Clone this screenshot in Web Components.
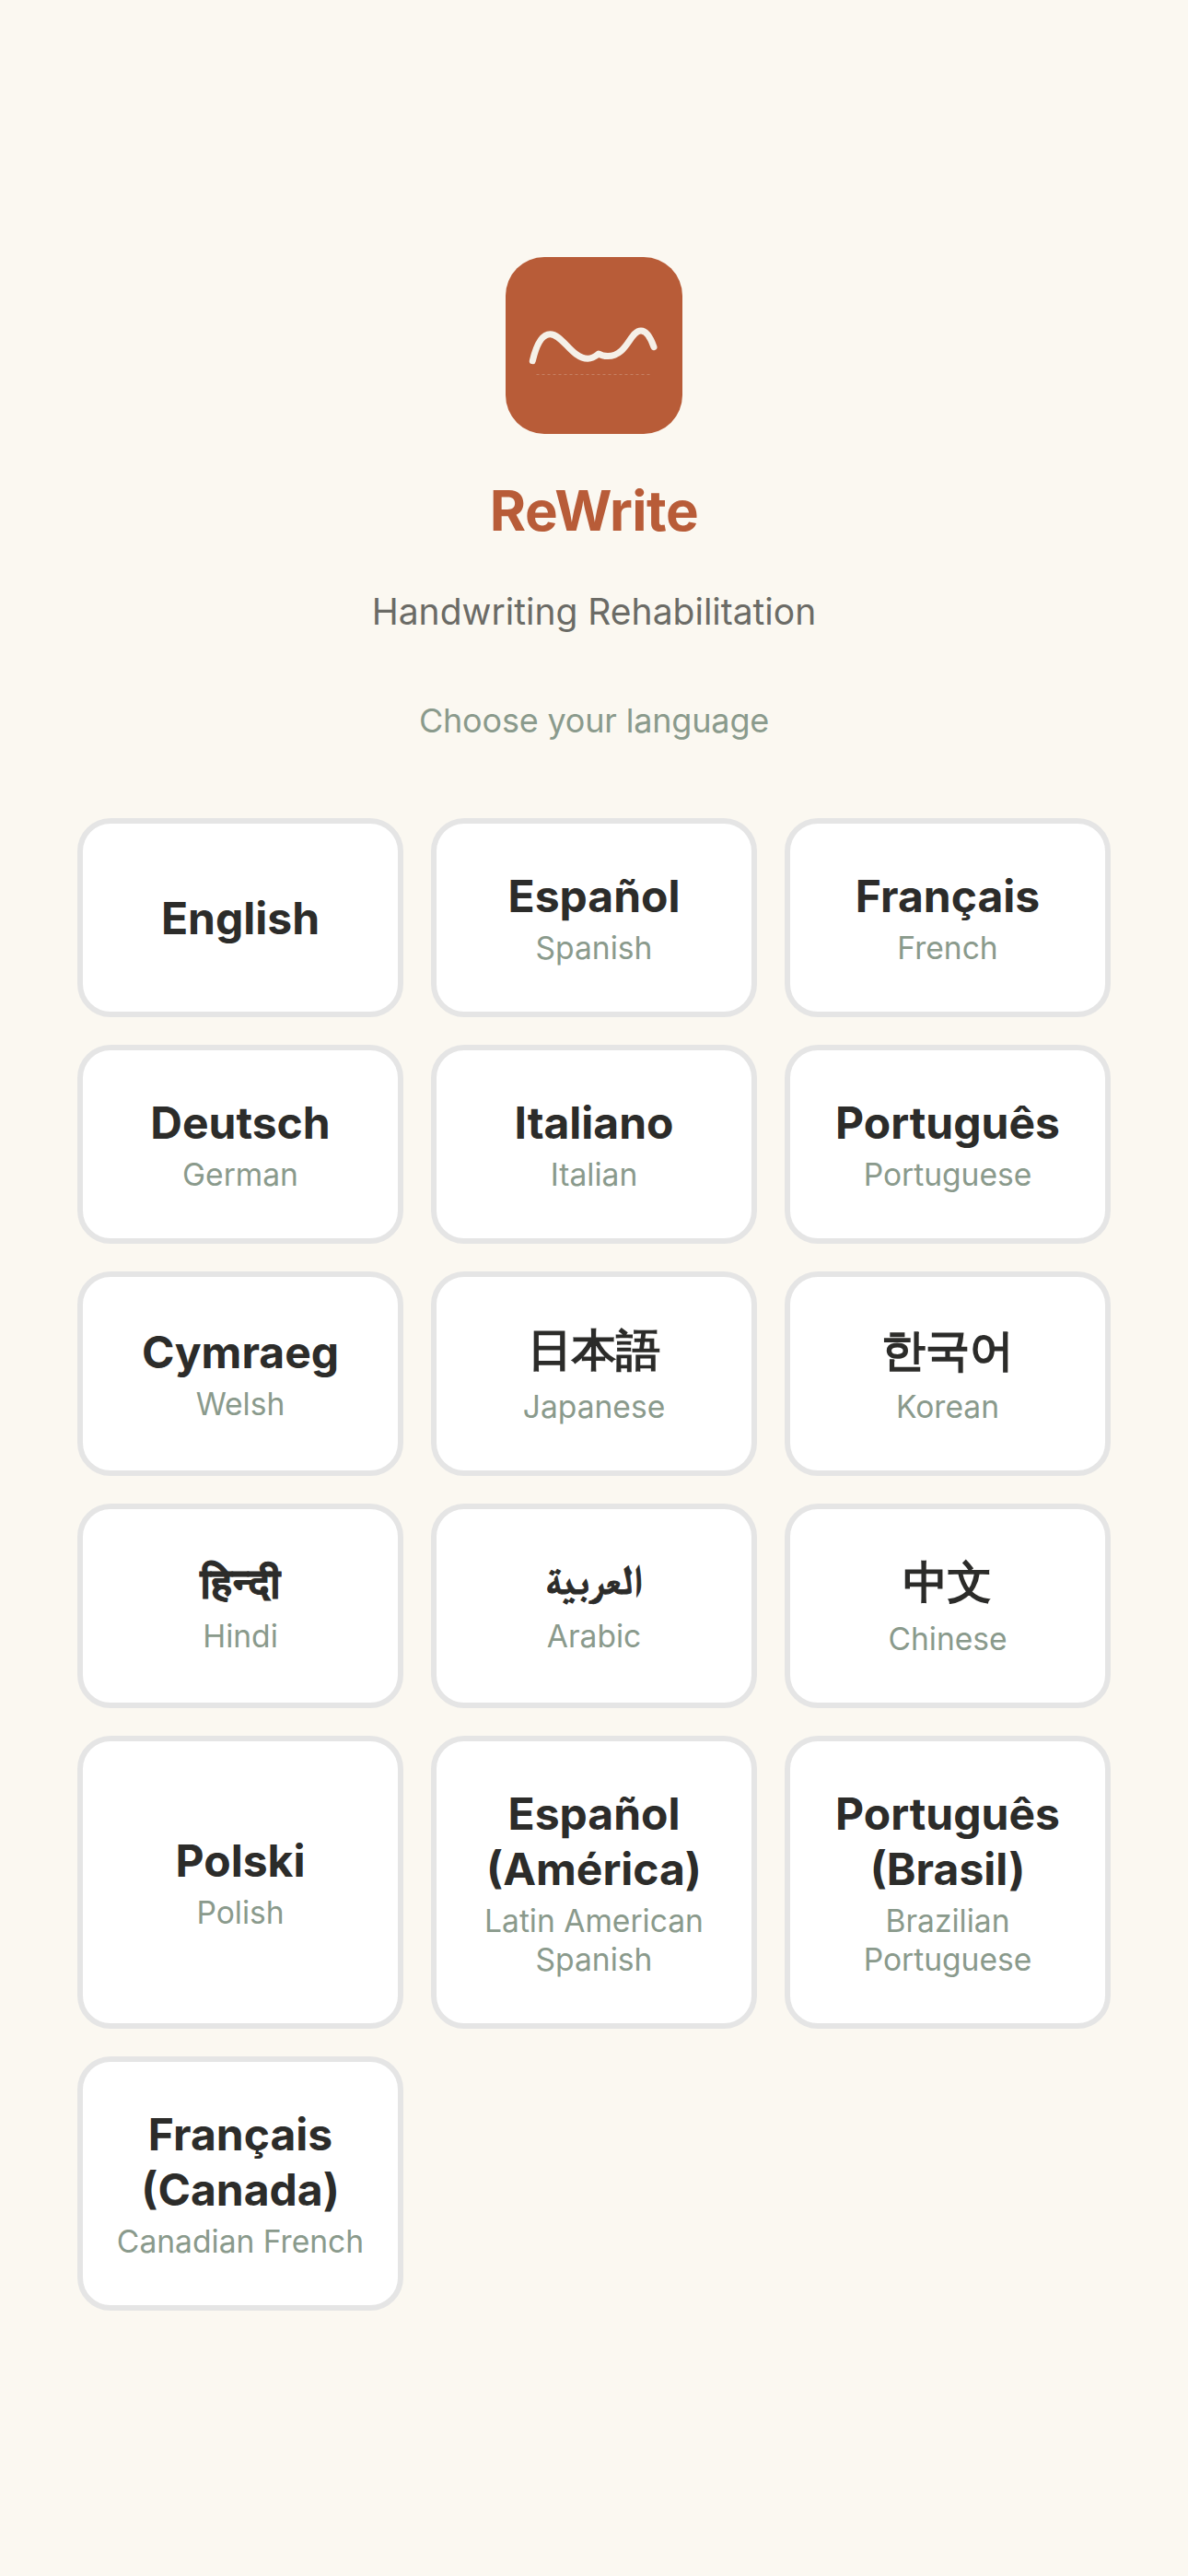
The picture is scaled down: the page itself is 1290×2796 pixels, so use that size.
<!DOCTYPE html>
<html lang="en">
<head>
<meta charset="utf-8">
<title>ReWrite</title>
<style>
	html, body { margin: 0; padding: 0; background: #fbf8f1; }
	body { font-family: Inter, "Noto Sans CJK JP", sans-serif; }
</style>
</head>
<body>
<rw-screen>
	<rw-brand title-text="ReWrite" tagline="Handwriting Rehabilitation" prompt="Choose your language"></rw-brand>
	<lang-grid>
		<lang-card name="English"></lang-card>
		<lang-card name="Español" sub="Spanish"></lang-card>
		<lang-card name="Français" sub="French"></lang-card>
		<lang-card name="Deutsch" sub="German"></lang-card>
		<lang-card name="Italiano" sub="Italian"></lang-card>
		<lang-card name="Português" sub="Portuguese"></lang-card>
		<lang-card name="Cymraeg" sub="Welsh"></lang-card>
		<lang-card name="日本語" sub="Japanese" script="cjk"></lang-card>
		<lang-card name="한국어" sub="Korean" script="cjk"></lang-card>
		<lang-card name="हिन्दी" sub="Hindi" script="deva"></lang-card>
		<lang-card name="العربية" sub="Arabic" script="arab"></lang-card>
		<lang-card name="中文" sub="Chinese" script="cjk"></lang-card>
		<lang-card name="Polski" sub="Polish"></lang-card>
		<lang-card name="Español (América)" sub="Latin American Spanish"></lang-card>
		<lang-card name="Português (Brasil)" sub="Brazilian Portuguese"></lang-card>
		<lang-card name="Français (Canada)" sub="Canadian French"></lang-card>
	</lang-grid>
</rw-screen>
<script>
class RwScreen extends HTMLElement {
	constructor() {
		super();
		this.attachShadow({ mode: "open" });
		this.shadowRoot.innerHTML = `
			<style>
				:host {
					display: flex;
					flex-direction: column;
					box-sizing: border-box;
					min-height: 2796px;
					padding: 279px 84px 288px;
				}
			</style>
			<slot></slot>
		`;
	}
}
customElements.define("rw-screen", RwScreen);

class RwLogo extends HTMLElement {
	constructor() {
		super();
		this.attachShadow({ mode: "open" });
		this.shadowRoot.innerHTML = `
			<style>
				:host {
					display: block;
					width: 192px;
					height: 192px;
					border-radius: 42px;
					background: #b85c38;
				}
				svg { display: block; }
			</style>
			<svg width="192" height="192" viewBox="0 0 192 192" fill="none" xmlns="http://www.w3.org/2000/svg">
				<path d="M29.3 112.7C33 97 39 83.7 48.3 83.7C62 83.7 72 110.3 89.3 110.3C95 110.3 98 107.5 101 105C104 107 107 107.5 111 107.5C132 107.5 135 80 147 80C153 80 158 89 161 97.7" stroke="#f5f0e8" stroke-width="7" stroke-linecap="round" stroke-linejoin="round"/>
				<line x1="33.5" y1="127.5" x2="158.5" y2="127.5" stroke="#f5f0e8" stroke-opacity="0.25" stroke-width="1" stroke-dasharray="3 3"/>
			</svg>
		`;
	}
}
customElements.define("rw-logo", RwLogo);

class RwBrand extends HTMLElement {
	constructor() {
		super();
		this.attachShadow({ mode: "open" });
		this.shadowRoot.innerHTML = `
			<style>
				:host {
					display: flex;
					flex-direction: column;
					align-items: center;
					margin-bottom: 83px;
				}
				h1 {
					margin: 47px 0 0;
					font-size: 60px;
					line-height: 72px;
					font-weight: 700;
					letter-spacing: -0.5px;
					color: #b85c38;
				}
				.tagline {
					margin: 50px 0 0;
					font-size: 39px;
					line-height: 48px;
					color: #6b6b66;
				}
				.prompt {
					margin: 72px 0 0;
					font-size: 36px;
					line-height: 45px;
					letter-spacing: -0.18px;
					color: #8a9a8c;
				}
			</style>
			<rw-logo></rw-logo>
			<h1></h1>
			<p class="tagline"></p>
			<p class="prompt"></p>
		`;
	}
	connectedCallback() {
		this.shadowRoot.querySelector("h1").textContent = this.getAttribute("title-text");
		this.shadowRoot.querySelector(".tagline").textContent = this.getAttribute("tagline");
		this.shadowRoot.querySelector(".prompt").textContent = this.getAttribute("prompt");
	}
}
customElements.define("rw-brand", RwBrand);

class LangGrid extends HTMLElement {
	constructor() {
		super();
		this.attachShadow({ mode: "open" });
		this.shadowRoot.innerHTML = `
			<style>
				:host {
					display: grid;
					grid-template-columns: repeat(3, 1fr);
					gap: 30px;
				}
			</style>
			<slot></slot>
		`;
	}
}
customElements.define("lang-grid", LangGrid);

class LangCard extends HTMLElement {
	constructor() {
		super();
		this.attachShadow({ mode: "open" });
		this.shadowRoot.innerHTML = `
			<style>
				:host {
					display: flex;
					flex-direction: column;
					align-items: center;
					justify-content: center;
					box-sizing: border-box;
					padding: 49px 24px 48px;
					border: 6px solid #e5e5e5;
					border-radius: 36px;
					background: #fff;
					text-align: center;
				}
				.name {
					font-size: 48px;
					line-height: 60px;
					font-weight: 700;
					color: #2c2c2a;
				}
				:host([script="cjk"]) .name {
					line-height: 62px;
					padding-bottom: 4px;
					font-family: "WenQuanYi Zen Hei", "WenQuanYi Micro Hei", "Droid Sans Fallback", "Noto Sans CJK JP", sans-serif;
					-webkit-text-stroke: 1.8px #2c2c2a;
				}
				:host([script="deva"]) .name,
				:host([script="arab"]) .name {
					font-size: 44px;
					font-family: FreeSans, "Lohit Devanagari", FreeSerif, Inter, sans-serif;
					-webkit-text-stroke: 1px #2c2c2a;
				}
				:host([script="deva"]) .name { line-height: 58px; padding-top: 2px; }
				:host([script="arab"]) .name { line-height: 55px; padding-bottom: 5px; }
				.sub {
					margin-top: 5px;
					font-size: 33.6px;
					line-height: 42px;
					color: #8a9a8c;
				}
				.sub:empty { display: none; }
			</style>
			<div class="name"></div>
			<div class="sub"></div>
		`;
	}
	connectedCallback() {
		this.shadowRoot.querySelector(".name").textContent = this.getAttribute("name");
		this.shadowRoot.querySelector(".sub").textContent = this.getAttribute("sub") || "";
	}
}
customElements.define("lang-card", LangCard);
</script>
</body>
</html>
